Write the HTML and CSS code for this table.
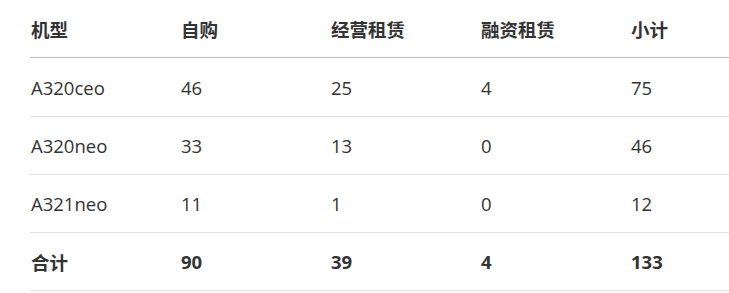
FILE: index.html
```html
<!DOCTYPE html>
<html lang="zh">
<head>
<meta charset="utf-8">
<link rel="stylesheet" href="styles.css">
</head>
<body>
<div class="wrap">
<table class="fleet">
  <colgroup>
    <col class="c"><col class="c"><col class="c"><col class="c"><col>
  </colgroup>
  <thead>
    <tr><th>机型</th><th>自购</th><th>经营租赁</th><th>融资租赁</th><th>小计</th></tr>
  </thead>
  <tbody>
    <tr><td>A320ceo</td><td>46</td><td>25</td><td>4</td><td>75</td></tr>
    <tr><td>A320neo</td><td>33</td><td>13</td><td>0</td><td>46</td></tr>
    <tr><td>A321neo</td><td>11</td><td>1</td><td>0</td><td>12</td></tr>
    <tr class="total"><td>合计</td><td>90</td><td>39</td><td>4</td><td>133</td></tr>
  </tbody>
</table>
</div>
</body>
</html>
```

FILE: styles.css
```css
html, body {
  margin: 0;
  padding: 0;
  background: #fff;
  overflow: hidden;
}
.wrap {
  padding-left: 30px;
}
.fleet {
  border-collapse: separate;
  border-spacing: 0;
  width: 100%;
  table-layout: fixed;
  font-family: "Open Sans", "Noto Sans CJK SC", sans-serif;
  font-size: 18.5px;
  color: #333;
}
.fleet .c {
  width: 150px;
}
.fleet th, .fleet td {
  text-align: left;
  padding: 0 0 0 1px;
  vertical-align: middle;
  box-sizing: border-box;
  white-space: nowrap;
}
.fleet th {
  height: 58px;
  font-weight: 700;
  border-bottom: 1px solid #bbbbbb;
  padding-top: 1px;
}
.fleet td {
  height: 58px;
  border-bottom: 1px solid #e2e2e2;
  font-weight: 400;
}
.fleet tbody tr:first-child td {
  height: 59px;
}
.fleet .total td {
  font-weight: 700;
}
```
